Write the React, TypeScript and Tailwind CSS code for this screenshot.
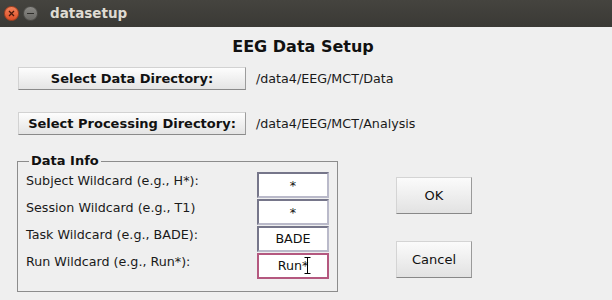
import React from "react";

const fields = [
  { label: "Subject Wildcard (e.g., H*):", value: "*" },
  { label: "Session Wildcard (e.g., T1)", value: "*" },
  { label: "Task Wildcard (e.g., BADE):", value: "BADE" },
  { label: "Run Wildcard (e.g., Run*):", value: "Run*", focused: true },
];

const dejavu = "font-['DejaVu_Sans',sans-serif]";

function DirButton({ label, path }: { label: string; path: string }) {
  return (
    <div className="flex items-center">
      <button
        className={`ml-[18px] w-[228px] h-[23px] bg-gradient-to-b from-[#fdfdfd] to-[#e4e4e4] border border-[#d2d2d2] border-b-[#8a8a8a] border-r-[#9c9c9c] text-[13px] font-bold text-[#111] leading-none ${dejavu}`}
      >
        {label}
      </button>
      <span className={`ml-[10px] text-[12.7px] text-[#1a1a1a] ${dejavu}`}>
        {path}
      </span>
    </div>
  );
}

function DialogButton({ label }: { label: string }) {
  return (
    <button
      className={`w-[76px] h-[37px] bg-gradient-to-b from-[#fbfbfb] to-[#e2e2e2] border border-[#d4d4d4] border-b-[#888] border-r-[#9a9a9a] text-[13px] text-[#111] ${dejavu}`}
    >
      {label}
    </button>
  );
}

export default function App() {
  return (
    <div className="w-[612px] h-[300px] bg-[#efefef] overflow-hidden flex flex-col">
      {/* Title bar */}
      <div className="h-[27px] bg-gradient-to-b from-[#45443f] to-[#3a3935] flex items-center shrink-0">
        <div className="ml-[4px] w-[15px] h-[15px] rounded-full bg-gradient-to-b from-[#f3825a] to-[#dc4e25] border border-[#a8401f] flex items-center justify-center">
          <svg width="7" height="7" viewBox="0 0 7 7">
            <path d="M1 1L6 6M6 1L1 6" stroke="#4a1a0c" strokeWidth="1.3" />
          </svg>
        </div>
        <div className="ml-[4px] w-[15px] h-[15px] rounded-full bg-gradient-to-b from-[#8a8985] to-[#6b6a66] border border-[#4e4d49] flex items-center justify-center">
          <div className="w-[7px] h-[1.5px] bg-[#2e2d2a]" />
        </div>
        <span className={`ml-[12px] text-[13.5px] font-bold text-[#dfdbd2] ${dejavu}`}>
          datasetup
        </span>
      </div>

      {/* Heading */}
      <h1
        className={`mt-[10px] text-center text-[16px] leading-[20px] font-bold text-[#111] pr-[6px] ${dejavu}`}
      >
        EEG Data Setup
      </h1>

      <div className="mt-[10px]">
        <DirButton label="Select Data Directory:" path="/data4/EEG/MCT/Data" />
      </div>
      <div className="mt-[22px]">
        <DirButton
          label="Select Processing Directory:"
          path="/data4/EEG/MCT/Analysis"
        />
      </div>

      {/* Data Info + buttons */}
      <div className="mt-[18px] flex items-start">
        <fieldset className="ml-[17px] w-[321px] border border-[#8c8c8c] pl-[8px] pr-[7px] pt-[3px] pb-[12px]">
          <legend
            className={`ml-[3px] px-[2px] text-[13px] leading-[16px] font-bold text-[#111] ${dejavu}`}
          >
            Data Info
          </legend>
          <div className="flex flex-col gap-[1px]">
            {fields.map((f) => (
              <div key={f.label} className="flex items-start h-[26px]">
                <span
                  className={`w-[231px] pt-[1px] text-[12.7px] leading-[15px] text-[#1a1a1a] ${dejavu}`}
                >
                  {f.label}
                </span>
                <div
                  className={`relative w-[72px] h-[26px] bg-white border-2 flex items-center justify-center text-[12.7px] text-[#111] ${dejavu} ${
                    f.focused
                      ? "border-[#b4587f]"
                      : "border-t-[#76768a] border-l-[#76768a] border-b-[#babaca] border-r-[#babaca]"
                  }`}
                >
                  <span className={f.value === "*" ? "pt-[2px]" : ""}>
                    {f.value}
                  </span>
                  {f.focused && (
                    <svg
                      className="absolute left-[45px] top-[2px]"
                      width="7"
                      height="17"
                      viewBox="0 0 7 17"
                    >
                      <path
                        d="M0.5 0.5H6.5M3.5 0.5V16.5M0.5 16.5H6.5"
                        stroke="#000"
                        strokeWidth="1"
                        fill="none"
                      />
                    </svg>
                  )}
                </div>
              </div>
            ))}
          </div>
        </fieldset>

        <div className="ml-[58px] mt-[24px] flex flex-col gap-[27px]">
          <DialogButton label="OK" />
          <DialogButton label="Cancel" />
        </div>
      </div>
    </div>
  );
}
